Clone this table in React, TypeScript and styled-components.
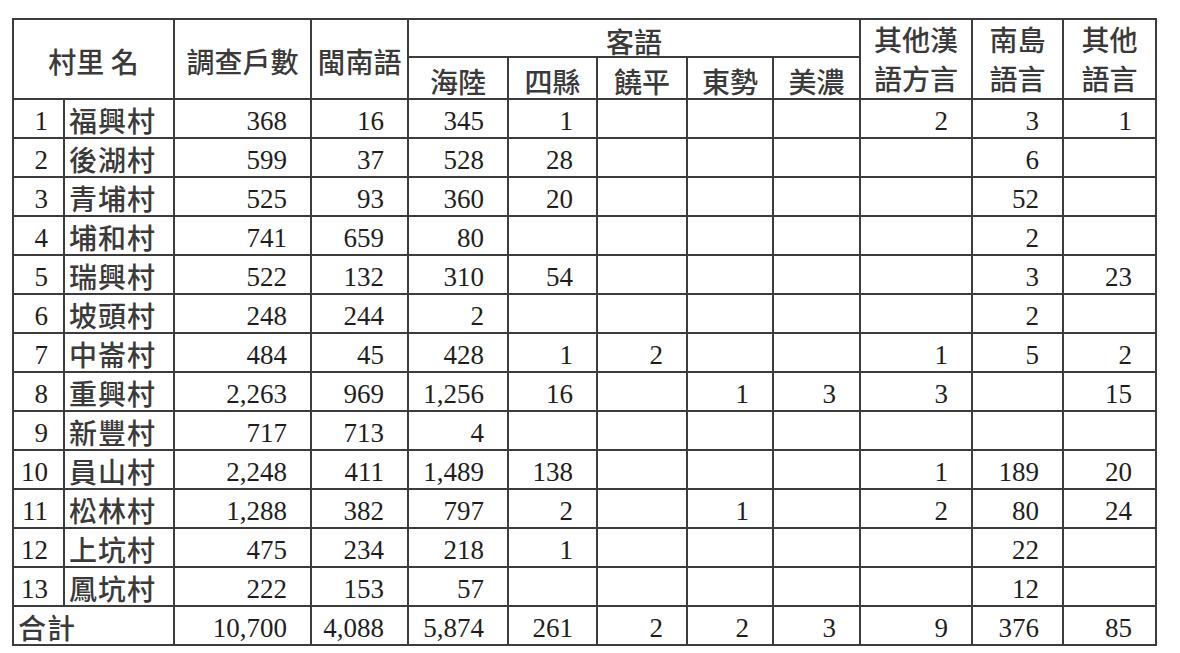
import React from 'react';
import styled, { createGlobalStyle } from 'styled-components';

const GlobalStyle = createGlobalStyle`
  html, body {
    margin: 0;
    padding: 0;
    background: #ffffff;
  }
  body {
    font-family: 'Liberation Serif', 'Noto Sans CJK TC', serif;
    color: #1e1e1e;
  }
`;

type Row = {
  no: number;
  name: string;
  values: string[];
};

const rows: Row[] = [
  { no: 1, name: '福興村', values: ['368', '16', '345', '1', '', '', '', '2', '3', '1'] },
  { no: 2, name: '後湖村', values: ['599', '37', '528', '28', '', '', '', '', '6', ''] },
  { no: 3, name: '青埔村', values: ['525', '93', '360', '20', '', '', '', '', '52', ''] },
  { no: 4, name: '埔和村', values: ['741', '659', '80', '', '', '', '', '', '2', ''] },
  { no: 5, name: '瑞興村', values: ['522', '132', '310', '54', '', '', '', '', '3', '23'] },
  { no: 6, name: '坡頭村', values: ['248', '244', '2', '', '', '', '', '', '2', ''] },
  { no: 7, name: '中崙村', values: ['484', '45', '428', '1', '2', '', '', '1', '5', '2'] },
  { no: 8, name: '重興村', values: ['2,263', '969', '1,256', '16', '', '1', '3', '3', '', '15'] },
  { no: 9, name: '新豐村', values: ['717', '713', '4', '', '', '', '', '', '', ''] },
  { no: 10, name: '員山村', values: ['2,248', '411', '1,489', '138', '', '', '', '1', '189', '20'] },
  { no: 11, name: '松林村', values: ['1,288', '382', '797', '2', '', '1', '', '2', '80', '24'] },
  { no: 12, name: '上坑村', values: ['475', '234', '218', '1', '', '', '', '', '22', ''] },
  { no: 13, name: '鳳坑村', values: ['222', '153', '57', '', '', '', '', '', '12', ''] },
];

const totals = ['10,700', '4,088', '5,874', '261', '2', '2', '3', '9', '376', '85'];

const colWidths = [51, 110, 137, 97, 100, 89, 90, 86, 87, 112, 91, 93];

const hakka = ['海陸', '四縣', '饒平', '東勢', '美濃'];

export default function App() {
  return (
    <Page>
      <GlobalStyle />
      <Table>
        <colgroup>
          {colWidths.map((w, i) => (
            <col key={i} style={{ width: w }} />
          ))}
        </colgroup>
        <thead>
          <tr>
            <HeadCell colSpan={2} rowSpan={2}>
              村里 名
            </HeadCell>
            <HeadCell rowSpan={2}>調查戶數</HeadCell>
            <HeadCell rowSpan={2}>閩南語</HeadCell>
            <GroupCell colSpan={5}>客語</GroupCell>
            <HeadCell rowSpan={2} $twoLine>
              其他漢
              <br />
              語方言
            </HeadCell>
            <HeadCell rowSpan={2} $twoLine>
              南島
              <br />
              語言
            </HeadCell>
            <HeadCell rowSpan={2} $twoLine>
              其他
              <br />
              語言
            </HeadCell>
          </tr>
          <tr>
            {hakka.map((h) => (
              <SubHeadCell key={h}>{h}</SubHeadCell>
            ))}
          </tr>
        </thead>
        <tbody>
          {rows.map((r) => (
            <tr key={r.no}>
              <IndexCell>{r.no}</IndexCell>
              <NameCell>{r.name}</NameCell>
              {r.values.map((v, i) => (
                <NumCell key={i}>{v}</NumCell>
              ))}
            </tr>
          ))}
          <tr>
            <TotalLabel colSpan={2}>合計</TotalLabel>
            {totals.map((v, i) => (
              <NumCell key={i}>{v}</NumCell>
            ))}
          </tr>
        </tbody>
      </Table>
    </Page>
  );
}

const Page = styled.div`
  padding: 18px 0 0 12px;
`;

const Table = styled.table`
  border-collapse: collapse;
  table-layout: fixed;
  width: 1143px;

  td,
  th {
    border: 2px solid #3c3c3c;
    padding: 0;
    box-sizing: border-box;
  }
`;

const HeadCell = styled.th<{ $twoLine?: boolean }>`
  font-family: 'Noto Sans CJK TC', sans-serif;
  font-weight: 500;
  font-size: 28px;
  line-height: ${({ $twoLine }) => ($twoLine ? '39px' : '32px')};
  color: #3a3a3a;
  text-align: center;
  vertical-align: middle;
  white-space: nowrap;
  padding-top: ${({ $twoLine }) => ($twoLine ? '0' : '4px')} !important;
`;

const GroupCell = styled.th`
  font-family: 'Noto Sans CJK TC', sans-serif;
  font-weight: 500;
  font-size: 28px;
  line-height: 30px;
  height: 37px;
  color: #3a3a3a;
  text-align: center;
  vertical-align: middle;
  padding-top: 6px !important;
`;

const SubHeadCell = styled.th`
  font-family: 'Noto Sans CJK TC', sans-serif;
  font-weight: 500;
  font-size: 28px;
  line-height: 30px;
  height: 41px;
  color: #3a3a3a;
  text-align: center;
  vertical-align: middle;
  padding-top: 6px !important;
`;

const BodyCell = styled.td`
  height: 39px;
  font-size: 27px;
  line-height: 30px;
  vertical-align: middle;
  white-space: nowrap;
  padding-top: 4px !important;
`;

const IndexCell = styled(BodyCell)`
  text-align: right;
  padding-right: 15px !important;
  color: #1e1e1e;
`;

const NameCell = styled(BodyCell)`
  font-family: 'Noto Sans CJK TC', sans-serif;
  font-weight: 500;
  font-size: 28px;
  letter-spacing: 1px;
  color: #3a3a3a;
  padding-left: 4px !important;
  padding-top: 2px !important;
`;

const NumCell = styled(BodyCell)`
  text-align: right;
  padding-right: 23px !important;
  color: #1e1e1e;
`;

const TotalLabel = styled(BodyCell)`
  font-family: 'Noto Sans CJK TC', sans-serif;
  font-weight: 500;
  font-size: 28px;
  letter-spacing: 1px;
  color: #3a3a3a;
  padding-left: 4px !important;
  padding-top: 2px !important;
`;
